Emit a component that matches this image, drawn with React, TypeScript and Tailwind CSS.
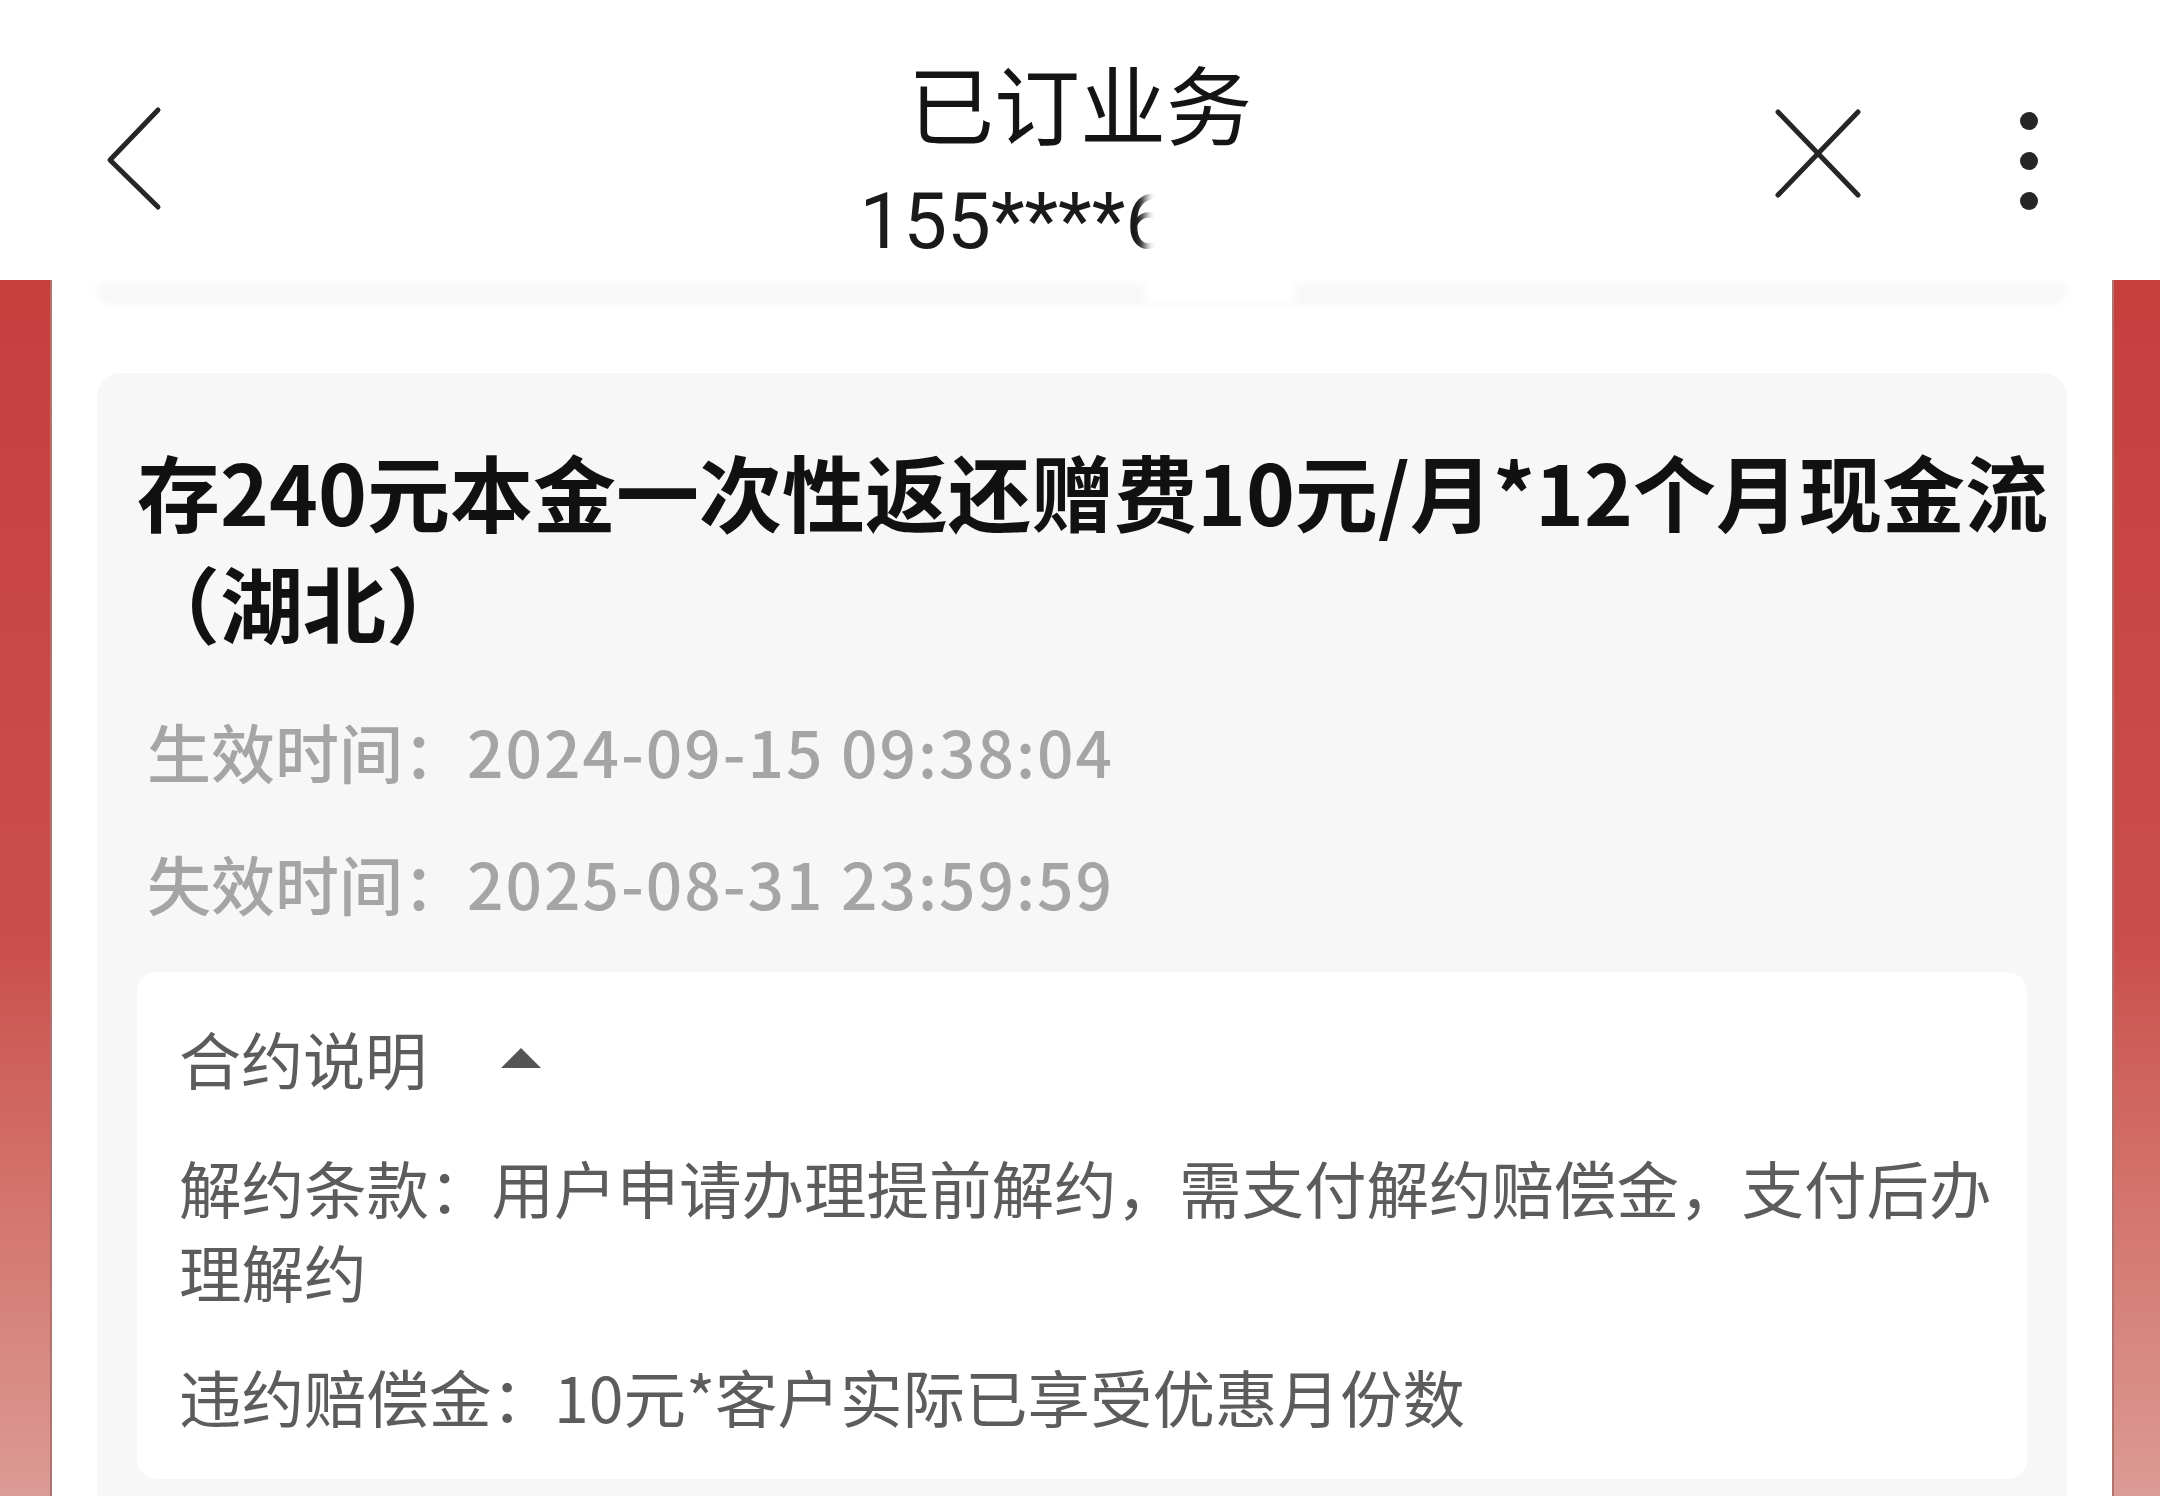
import React from "react";

function BackIcon() {
  return (
    <svg width="60" height="110" viewBox="0 0 60 110" fill="none">
      <polyline
        points="54,5 6,55 54,102"
        stroke="#262626"
        strokeWidth="5"
        strokeLinecap="round"
        strokeLinejoin="round"
      />
    </svg>
  );
}

function CloseIcon() {
  return (
    <svg width="92" height="95" viewBox="0 0 92 95" fill="none">
      <line x1="6" y1="6" x2="86" y2="89" stroke="#262626" strokeWidth="5" strokeLinecap="round" />
      <line x1="86" y1="6" x2="6" y2="89" stroke="#262626" strokeWidth="5" strokeLinecap="round" />
    </svg>
  );
}

function MoreIcon() {
  return (
    <svg width="18" height="100" viewBox="0 0 18 100" fill="#262626">
      <circle cx="9" cy="9" r="9" />
      <circle cx="9" cy="49" r="9" />
      <circle cx="9" cy="89" r="9" />
    </svg>
  );
}

function CaretUp() {
  return (
    <svg width="44" height="22" viewBox="0 0 44 22" fill="#555555">
      <polygon points="22,1 42,21 2,21" />
    </svg>
  );
}

function Header() {
  return (
    <div className="relative z-10 grid h-[280px] shrink-0 grid-cols-[1fr_auto_1fr] bg-white">
      <div className="pl-[104px] pt-[105px]">
        <BackIcon />
      </div>
      <div className="flex flex-col items-center pt-[52px]">
        <div className="text-[86px] leading-[100px] text-[#141414] font-['Noto_Sans_CJK_SC',sans-serif]">
          已订业务
        </div>
        <div className="relative mt-[25px] text-[78px] leading-[90px] text-[#1a1a1a] font-['Roboto',sans-serif]">
          155****6281
          <span className="absolute left-[286px] top-[-12px] h-[140px] w-[150px] bg-white blur-[5px]" />
        </div>
      </div>
      <div className="flex items-start justify-end pr-[122px]">
        <div className="mt-[106px]">
          <CloseIcon />
        </div>
        <div className="ml-[156px] mt-[112px]">
          <MoreIcon />
        </div>
      </div>
    </div>
  );
}

function SideStrip({ side }: { side: "left" | "right" }) {
  return (
    <div
      className={
        side === "left"
          ? "w-[52px] shrink-0 border-r-2 border-[#b07470] bg-linear-to-b from-[#c53f3d] via-[#ca4f4c] via-55% to-[#db9b95]"
          : "w-[48px] shrink-0 border-l-2 border-[#b07470] bg-linear-to-b from-[#c53f3d] via-[#ca4f4c] via-55% to-[#db9b95]"
      }
    />
  );
}

function ContractNotes() {
  return (
    <div className="mt-[24px] rounded-[20px] bg-white pb-[41px] pl-[42px] pr-[26px] pt-[46px] text-[#5c5c5c]">
      <div className="flex h-[80px] items-center">
        <span className="text-[62px] leading-[80px]">合约说明</span>
        <span className="ml-[72px] flex items-center">
          <CaretUp />
        </span>
      </div>
      <p className="mt-[47px] text-[62.5px] leading-[84px]">
        解约条款：用户申请办理提前解约，需支付解约赔偿金，支付后办理解约
      </p>
      <p className="mt-[41px] text-[62.5px] leading-[84px]">
        违约赔偿金：10元*客户实际已享受优惠月份数
      </p>
    </div>
  );
}

export default function App() {
  return (
    <div className="flex h-[1496px] w-[2160px] flex-col overflow-hidden bg-white font-['Noto_Sans_CJK_SC',sans-serif]">
      <Header />
      <div className="flex min-h-0 flex-1 overflow-hidden">
        <SideStrip side="left" />
        <div className="min-w-0 flex-1 bg-white px-[45px]">
          <div className="mt-[3px] h-[22px] rounded-b-[16px] bg-[#f8f8f8] blur-[2px]" />
          <div className="mt-[68px] rounded-[24px] bg-[#f7f7f7] px-[40px] pt-[62px] pb-[40px]">
            <h1 className="whitespace-nowrap text-[83px] font-bold leading-[111px] text-[#111111]">
              存240元本金一次性返还赠费10元/月*12个月现金流
              <br />
              （湖北）
            </h1>
            <div className="mt-[27px] pl-[10px] text-[64px] font-medium leading-[132px] text-[#a5a5a5]">
              <div>
                生效时间：<span className="tracking-[2px]">2024-09-15 09:38:04</span>
              </div>
              <div>
                失效时间：<span className="tracking-[2px]">2025-08-31 23:59:59</span>
              </div>
            </div>
            <ContractNotes />
          </div>
        </div>
        <SideStrip side="right" />
      </div>
    </div>
  );
}
